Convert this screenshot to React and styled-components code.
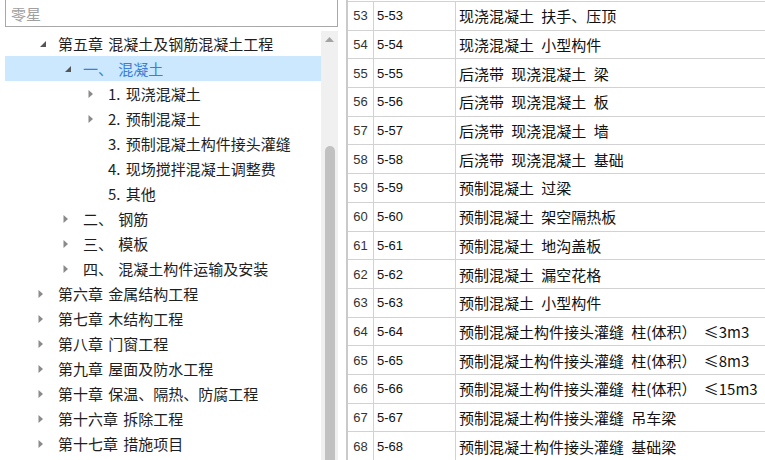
import React from "react";
import styled, { createGlobalStyle } from "styled-components";

const Global = createGlobalStyle`
  html, body { margin: 0; padding: 0; background: #fff; overflow: hidden; }
  body { width: 765px; height: 460px; }
`;

const Page = styled.div`
  display: flex;
  width: 765px;
  height: 460px;
  overflow: hidden;
  background: #fff;
`;

const LeftPanel = styled.div`
  display: flex;
  flex-direction: column;
  width: 333px;
  margin-left: 5px;
  height: 460px;
`;

const Search = styled.div`
  box-sizing: border-box;
  height: 28px;
  margin-top: -1px;
  border: 1px solid #a8a8a8;
  display: flex;
  align-items: center;
  padding-left: 5px;
  font-family: "Noto Sans CJK SC", sans-serif;
  font-size: 15px;
  color: #a0a0a0;
`;

const TreeArea = styled.div`
  display: flex;
  flex: 1;
  margin-top: 4px;
  min-height: 0;
`;

const TreeList = styled.div`
  flex: 1;
  display: flex;
  flex-direction: column;
`;

const Row = styled.div`
  display: flex;
  align-items: center;
  height: 25px;
  flex-shrink: 0;
  padding-left: ${(p) => 31 + p.$level * 25}px;
  background: ${(p) => (p.$selected ? "#cce8ff" : "transparent")};
  color: ${(p) => (p.$selected ? "#3a7fd5" : "#1e1e1e")};
  font-family: "Noto Sans CJK SC", sans-serif;
  font-size: 15px;
  line-height: 25px;
  word-spacing: 2px;
  white-space: pre;
`;

const Arrow = styled.span`
  display: flex;
  width: 16px;
  height: 16px;
  flex-shrink: 0;
  margin-right: 6px;
`;

const Scrollbar = styled.div`
  width: 17px;
  background: #f0f0f0;
  display: flex;
  flex-direction: column;
  align-items: center;
`;

const UpButton = styled.div`
  height: 17px;
  width: 17px;
  display: flex;
  align-items: center;
  justify-content: center;
`;

const Thumb = styled.div`
  width: 10px;
  margin-top: 98px;
  flex: 1;
  background: #c1c1c1;
  border-radius: 5px 5px 0 0;
`;

const Grid = styled.div`
  margin-left: 8px;
  flex: 1;
  border-left: 2px solid #cacaca;
  padding-top: 1px;
  overflow: hidden;
  display: flex;
  flex-direction: column;
`;

const GridRow = styled.div`
  box-sizing: border-box;
  display: flex;
  flex-shrink: 0;
  height: 28.7px;
  border-top: 1px solid #d2d2d2;
  color: #111;
`;

const NumCell = styled.div`
  width: 25px;
  border-right: 1px solid #d2d2d2;
  display: flex;
  align-items: center;
  justify-content: center;
  font-family: "Liberation Sans", sans-serif;
  font-size: 13px;
  color: #333;
`;

const CodeCell = styled.div`
  width: 78px;
  padding-left: 3px;
  border-right: 1px solid #d2d2d2;
  display: flex;
  align-items: center;
  font-family: "Liberation Sans", sans-serif;
  font-size: 13px;
`;

const DescCell = styled.div`
  flex: 1;
  padding-left: 3px;
  display: flex;
  align-items: center;
  font-family: "Noto Sans CJK SC", sans-serif;
  font-size: 15px;
  word-spacing: 4px;
  white-space: pre;
`;

const Expanded = () => (
  <svg width="16" height="16" viewBox="0 0 16 16">
    <polygon points="10,5 10,11 4,11" fill="#555" />
  </svg>
);

const Collapsed = () => (
  <svg width="16" height="16" viewBox="0 0 16 16">
    <polygon points="2.5,4 7,8 2.5,12" fill="#8a8a8a" />
  </svg>
);

const tree = [
  { level: 0, state: "open", text: "第五章 混凝土及钢筋混凝土工程" },
  { level: 1, state: "open", text: "一、 混凝土", selected: true },
  { level: 2, state: "closed", text: "1. 现浇混凝土" },
  { level: 2, state: "closed", text: "2. 预制混凝土" },
  { level: 2, state: "leaf", text: "3. 预制混凝土构件接头灌缝" },
  { level: 2, state: "leaf", text: "4. 现场搅拌混凝土调整费" },
  { level: 2, state: "leaf", text: "5. 其他" },
  { level: 1, state: "closed", text: "二、 钢筋" },
  { level: 1, state: "closed", text: "三、 模板" },
  { level: 1, state: "closed", text: "四、 混凝土构件运输及安装" },
  { level: 0, state: "closed", text: "第六章 金属结构工程" },
  { level: 0, state: "closed", text: "第七章 木结构工程" },
  { level: 0, state: "closed", text: "第八章 门窗工程" },
  { level: 0, state: "closed", text: "第九章 屋面及防水工程" },
  { level: 0, state: "closed", text: "第十章 保温、隔热、防腐工程" },
  { level: 0, state: "closed", text: "第十六章 拆除工程" },
  { level: 0, state: "closed", text: "第十七章 措施项目" },
];

const rows = [
  [53, "现浇混凝土 扶手、压顶"],
  [54, "现浇混凝土 小型构件"],
  [55, "后浇带 现浇混凝土 梁"],
  [56, "后浇带 现浇混凝土 板"],
  [57, "后浇带 现浇混凝土 墙"],
  [58, "后浇带 现浇混凝土 基础"],
  [59, "预制混凝土 过梁"],
  [60, "预制混凝土 架空隔热板"],
  [61, "预制混凝土 地沟盖板"],
  [62, "预制混凝土 漏空花格"],
  [63, "预制混凝土 小型构件"],
  [64, "预制混凝土构件接头灌缝 柱(体积） ≤3m3"],
  [65, "预制混凝土构件接头灌缝 柱(体积） ≤8m3"],
  [66, "预制混凝土构件接头灌缝 柱(体积） ≤15m3"],
  [67, "预制混凝土构件接头灌缝 吊车梁"],
  [68, "预制混凝土构件接头灌缝 基础梁"],
];

export default function App() {
  return (
    <>
      <Global />
      <Page>
        <LeftPanel>
          <Search>零星</Search>
          <TreeArea>
            <TreeList>
              {tree.map((t, i) => (
                <Row key={i} $level={t.level} $selected={t.selected}>
                  <Arrow>
                    {t.state === "open" && <Expanded />}
                    {t.state === "closed" && <Collapsed />}
                  </Arrow>
                  {t.text}
                </Row>
              ))}
            </TreeList>
            <Scrollbar>
              <UpButton>
                <svg width="9" height="5" viewBox="0 0 9 5">
                  <polygon points="0,5 4.5,0 9,5" fill="#a3a3a3" />
                </svg>
              </UpButton>
              <Thumb />
            </Scrollbar>
          </TreeArea>
        </LeftPanel>
        <Grid>
          {rows.map(([n, d]) => (
            <GridRow key={n}>
              <NumCell>{n}</NumCell>
              <CodeCell>5-{n}</CodeCell>
              <DescCell>{d}</DescCell>
            </GridRow>
          ))}
        </Grid>
      </Page>
    </>
  );
}
